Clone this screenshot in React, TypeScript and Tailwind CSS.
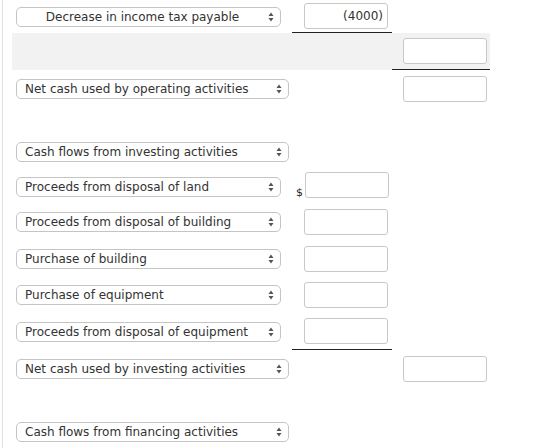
import React from "react";

type Opt = { label: string; width: number; center?: boolean };

const Arrows = () => (
  <svg width="6" height="10" viewBox="0 0 6 10" className="shrink-0">
    <path d="M3 0.5 L5.5 4 L0.5 4 Z" fill="#555" />
    <path d="M3 9.5 L5.5 6 L0.5 6 Z" fill="#555" />
  </svg>
);

const FakeSelect = ({ label, width, center }: Opt) => (
  <div
    className="flex items-center h-[20px] rounded-[5px] border border-[#c4c4c4] bg-white pl-[8px] pr-[6px] text-[12px] text-[#333]"
    style={{ width }}
  >
    <span className={center ? "flex-1 text-center pr-[8px]" : "flex-1"}>{label}</span>
    <Arrows />
  </div>
);

const Box = ({ value }: { value?: string }) => (
  <div className="w-[84px] h-[26px] rounded-[3px] border border-[#c8c8c8] bg-white flex items-center justify-end pr-[4px] text-[12px] text-[#333]">
    {value}
  </div>
);

const App = () => {
  return (
    <div
      className="w-[547px] h-[448px] overflow-hidden bg-white"
      style={{ fontFamily: '"DejaVu Sans", Verdana, sans-serif' }}
    >
      <div className="ml-[2px] h-full border-l border-[#dde1e8]">
        {/* row 1 */}
        <div className="flex h-[33px]">
          <div className="w-[289px] pl-[13px] flex items-center">
            <FakeSelect label="Decrease in income tax payable" width={265} center />
          </div>
          <div className="w-[100px] pl-[12px] flex items-center border-b border-[#222]">
            <Box value="(4000)" />
          </div>
        </div>

        {/* gray band */}
        <div className="flex h-[37px] ml-[9px] w-[478px] bg-[#f2f2f2]">
          <div className="w-[380px]" />
          <div className="w-[98px] pl-[11px] flex items-center border-b border-[#222]">
            <Box />
          </div>
        </div>

        {/* net operating */}
        <div className="flex h-[38px]">
          <div className="w-[289px] pl-[13px] flex items-center">
            <FakeSelect label="Net cash used by operating activities" width={273} />
          </div>
          <div className="w-[100px]" />
          <div className="w-[98px] pl-[11px] flex items-center">
            <Box />
          </div>
        </div>

        <div className="h-[26px]" />

        <div className="flex h-[36px]">
          <div className="w-[289px] pl-[13px] flex items-center">
            <FakeSelect label="Cash flows from investing activities" width={273} />
          </div>
        </div>

        <div className="flex h-[33px]">
          <div className="w-[289px] pl-[13px] flex items-center">
            <FakeSelect label="Proceeds from disposal of land" width={265} />
          </div>
          <div className="w-[100px] pl-[4px] flex items-center">
            <span className="w-[9px] text-[11px] text-[#222] mt-[14px]">$</span>
            <div className="-mt-[3px]">
              <Box />
            </div>
          </div>
        </div>

        <div className="flex h-[37px]">
          <div className="w-[289px] pl-[13px] flex items-center">
            <FakeSelect label="Proceeds from disposal of building" width={265} />
          </div>
          <div className="w-[100px] pl-[12px] flex items-center">
            <Box />
          </div>
        </div>

        <div className="flex h-[37px]">
          <div className="w-[289px] pl-[13px] flex items-center">
            <FakeSelect label="Purchase of building" width={265} />
          </div>
          <div className="w-[100px] pl-[12px] flex items-center">
            <Box />
          </div>
        </div>

        <div className="flex h-[36px]">
          <div className="w-[289px] pl-[13px] flex items-center">
            <FakeSelect label="Purchase of equipment" width={265} />
          </div>
          <div className="w-[100px] pl-[12px] flex items-center">
            <Box />
          </div>
        </div>

        <div className="flex h-[37px]">
          <div className="w-[289px] pl-[13px] flex items-center">
            <FakeSelect label="Proceeds from disposal of equipment" width={265} />
          </div>
          <div className="w-[100px] pl-[12px] flex items-center border-b border-[#222]">
            <Box />
          </div>
        </div>

        <div className="flex h-[37px]">
          <div className="w-[289px] pl-[13px] flex items-center">
            <FakeSelect label="Net cash used by investing activities" width={273} />
          </div>
          <div className="w-[100px]" />
          <div className="w-[98px] pl-[11px] flex items-center">
            <Box />
          </div>
        </div>

        <div className="h-[26px]" />

        <div className="flex h-[37px]">
          <div className="w-[289px] pl-[13px] flex items-center">
            <FakeSelect label="Cash flows from financing activities" width={273} />
          </div>
        </div>
      </div>
    </div>
  );
};

export default App;
